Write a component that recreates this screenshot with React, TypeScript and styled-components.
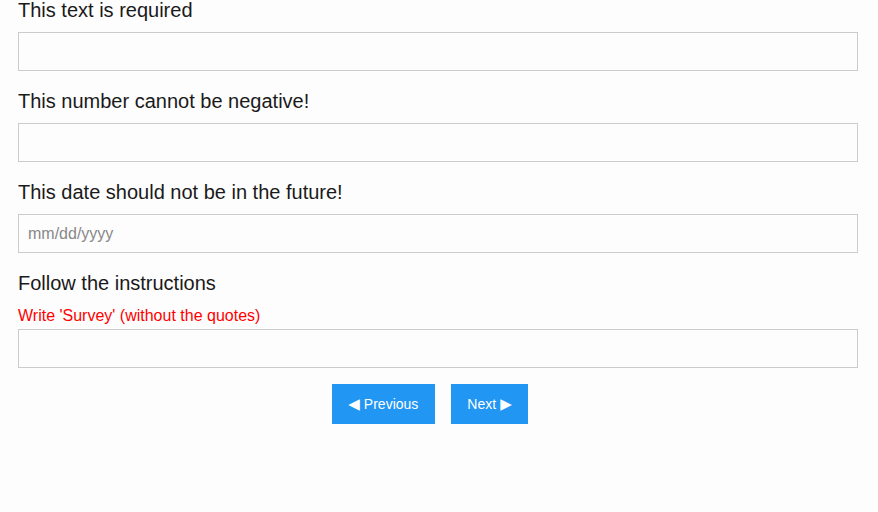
import React from 'react';
import styled, { createGlobalStyle } from 'styled-components';

const GlobalStyle = createGlobalStyle`
  html, body {
    margin: 0;
    padding: 0;
    background: #fdfdfd;
  }
  body {
    font-family: "Liberation Sans", Arial, sans-serif;
    color: #1a1a1a;
  }
`;

const Page = styled.div`
  padding: 0 20px 0 18px;
`;

const Question = styled.div`
  display: flex;
  flex-direction: column;
  margin-bottom: 20px;
`;

const Title = styled.h5`
  margin: 0 0 12px;
  font-size: 20px;
  line-height: 20px;
  font-weight: normal;
  color: #1a1a1a;
`;

const Description = styled.div`
  margin: 1px 0 3px;
  font-size: 16px;
  line-height: 20px;
  color: #ff0000;
`;

const Input = styled.input`
  box-sizing: border-box;
  width: 100%;
  height: 39px;
  margin: 0;
  padding: 0 9px;
  border: 1px solid #cccccc;
  border-radius: 0;
  background: #fdfdfd;
  font-family: "Liberation Sans", Arial, sans-serif;
  font-size: 16px;
  color: #555;
  outline: none;

  &::placeholder {
    color: #888;
  }
`;

const Nav = styled.div`
  display: flex;
  justify-content: center;
  gap: 16px;
  margin: -4px 0 0 -16px;
`;

const NavButton = styled.button`
  display: flex;
  align-items: center;
  gap: 4px;
  height: 40px;
  padding: 0 16.5px;
  border: none;
  border-radius: 0;
  background: #2196f3;
  color: #ffffff;
  font-family: "Liberation Sans", Arial, sans-serif;
  font-size: 14px;
  cursor: pointer;
`;

const Arrow = styled.span`
  font-family: "DejaVu Sans", sans-serif;
  font-size: 15px;
  line-height: 1;
`;

type QuestionProps = {
  title: string;
  description?: string;
  placeholder?: string;
};

const QuestionBlock: React.FC<QuestionProps> = ({ title, description, placeholder }) => {
  return (
    <Question>
      <Title>{title}</Title>
      {description && <Description>{description}</Description>}
      <Input placeholder={placeholder} />
    </Question>
  );
};

const App: React.FC = () => {
  return (
    <>
      <GlobalStyle />
      <Page>
        <QuestionBlock title="This text is required" />
        <QuestionBlock title="This number cannot be negative!" />
        <QuestionBlock title="This date should not be in the future!" placeholder="mm/dd/yyyy" />
        <QuestionBlock
          title="Follow the instructions"
          description="Write 'Survey' (without the quotes)"
        />
        <Nav>
          <NavButton>
            <Arrow>◀</Arrow>Previous
          </NavButton>
          <NavButton>
            Next<Arrow>▶</Arrow>
          </NavButton>
        </Nav>
      </Page>
    </>
  );
};

export default App;
